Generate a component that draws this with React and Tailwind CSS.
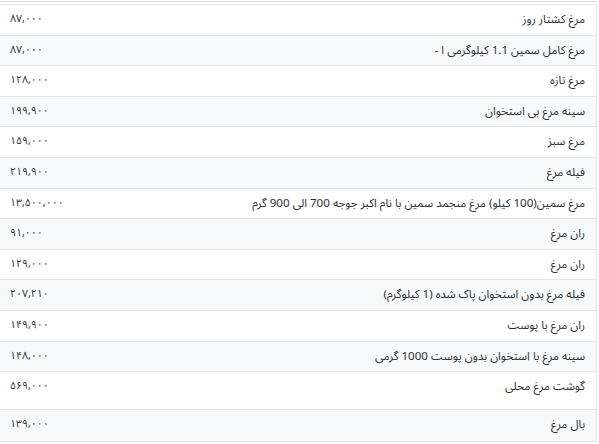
const rows = [
  { name: "مرغ کشتار روز", price: "۸۷,۰۰۰" },
  { name: "مرغ کامل سمین 1.1 کیلوگرمی ا -", price: "۸۷,۰۰۰" },
  { name: "مرغ تازه", price: "۱۲۸,۰۰۰" },
  { name: "سینه مرغ بی استخوان", price: "۱۹۹,۹۰۰" },
  { name: "مرغ سبز", price: "۱۵۹,۰۰۰" },
  { name: "فیله مرغ", price: "۲۱۹,۹۰۰" },
  { name: "مرغ سمین(100 کیلو) مرغ منجمد سمین با نام اکبر جوجه 700 الی 900 گرم", price: "۱۳,۵۰۰,۰۰۰" },
  { name: "ران مرغ", price: "۹۱,۰۰۰" },
  { name: "ران مرغ", price: "۱۲۹,۰۰۰" },
  { name: "فیله مرغ بدون استخوان پاک شده (1 کیلوگرم)", price: "۲۰۷,۲۱۰" },
  { name: "ران مرغ با پوست", price: "۱۴۹,۹۰۰" },
  { name: "سینه مرغ با استخوان بدون پوست 1000 گرمی", price: "۱۴۸,۰۰۰" },
  { name: "گوشت مرغ محلی", price: "۵۶۹,۰۰۰", tall: true },
  { name: "بال مرغ", price: "۱۳۹,۰۰۰" },
];

export default function App() {
  return (
    <div
      className="w-[599px] h-[444px] bg-white text-[#2b2f33] overflow-hidden"
      style={{ fontFamily: '"Noto Sans Arabic", "DejaVu Sans", sans-serif' }}
    >
      <div className="border-t border-[#d8d8d8] mt-[1px] w-[597px]">
        <div className="h-[2px]" />
        <div dir="rtl" className="border border-[#e3e6e9] border-l-0">
          {rows.map((row, i) => (
            <div
              key={i}
              className={`flex items-start justify-between px-[11px] border-b border-[#e3e6e9] last:border-b-0 ${
                i % 2 === 1 ? "bg-[#f8f9fa]" : "bg-white"
              } ${row.tall ? "h-[38px] pt-[6px]" : "h-[30.6px] pt-[6px]"}`}
            >
              <span className="text-[11.6px]">{row.name}</span>
              <span className="text-[10.5px] pt-[1px] ml-[-1px]">{row.price}</span>
            </div>
          ))}
        </div>
      </div>
    </div>
  );
}
